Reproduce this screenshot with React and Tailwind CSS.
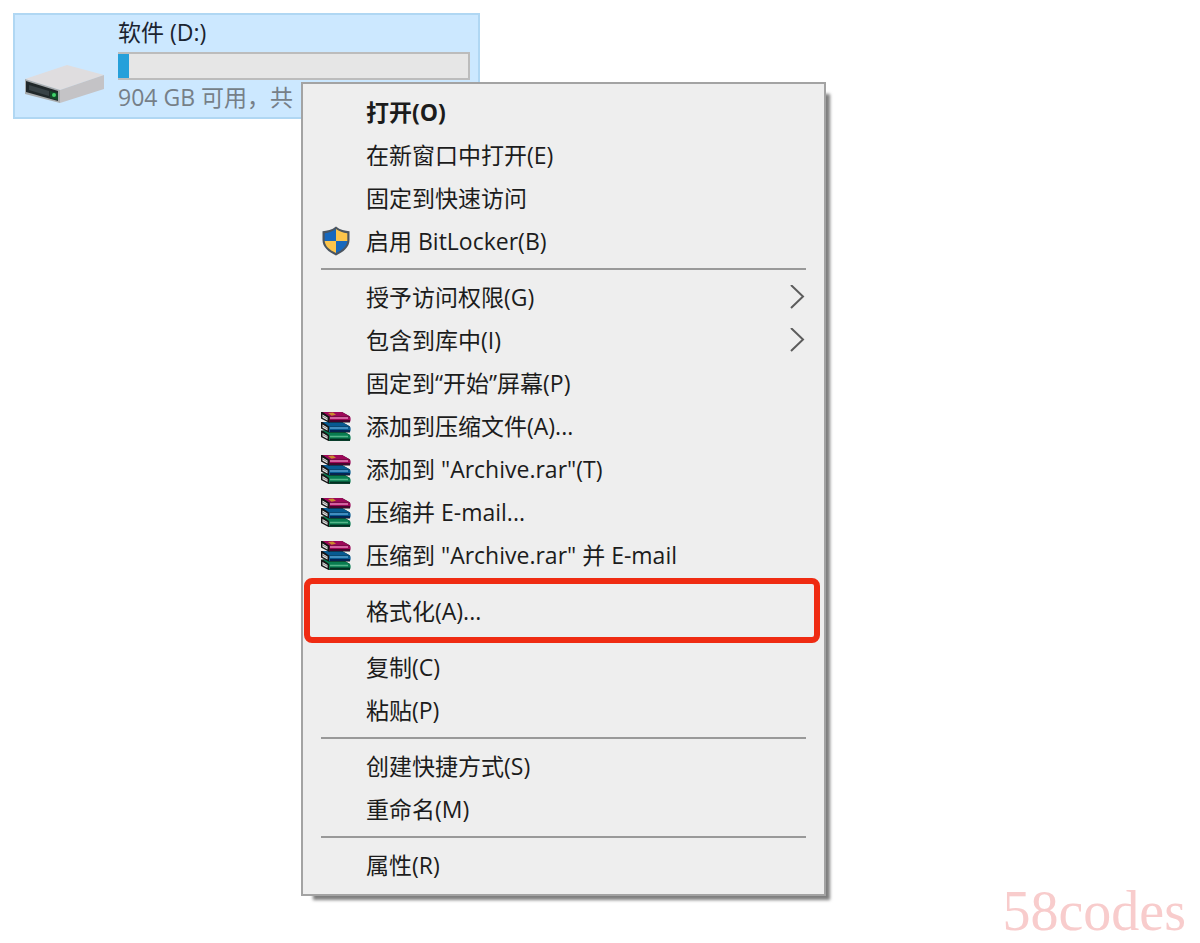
import clsx from 'clsx'

const menuGroups = [
  [
    { label: '打开(O)', bold: true },
    { label: '在新窗口中打开(E)' },
    { label: '固定到快速访问' },
    { label: '启用 BitLocker(B)', icon: ShieldIcon },
  ],
  [
    { label: '授予访问权限(G)', submenu: true },
    { label: '包含到库中(I)', submenu: true },
    { label: '固定到“开始”屏幕(P)' },
    { label: '添加到压缩文件(A)...', icon: BooksIcon },
    { label: '添加到 "Archive.rar"(T)', icon: BooksIcon },
    { label: '压缩并 E-mail...', icon: BooksIcon },
    { label: '压缩到 "Archive.rar" 并 E-mail', icon: BooksIcon },
  ],
  [{ label: '格式化(A)...', highlighted: true }],
  [{ label: '复制(C)' }, { label: '粘贴(P)' }],
  [{ label: '创建快捷方式(S)' }, { label: '重命名(M)' }],
  [{ label: '属性(R)' }],
]

function ShieldIcon() {
  return (
    <svg viewBox="0 0 32 32" className="w-8 h-8" aria-hidden="true">
      <path d="M16 0.500C12 4 7 5 2.500 5.200V14c0 7 6 12 13.500 15.500C23.500 26 29.500 21 29.500 14V5.200C25 5 20 4 16 .5z" fill="#4b5560" />
      <path d="M16 3C13 5.300 9 6.800 4.700 7.200V15H16z" fill="#1768bd" />
      <path d="M16 3c3 2.300 7 3.800 11.300 4.200V15H16z" fill="#fcc54b" />
      <path d="M4.700 15c.5 5.500 5 9 11.300 12V15z" fill="#fcc54b" />
      <path d="M27.300 15c-.5 5.500-5 9-11.300 12V15z" fill="#1768bd" />
    </svg>
  )
}

function Book({ y, cover, shine, dark }) {
  return (
    <g transform={`translate(0 ${y})`}>
      <path d="M1 1h21l8 4.500v6H8.500L1 7.500z" fill="#151515" />
      <path d="M2.500 1H22l8 4.500H9z" fill={cover} />
      <path d="M9 5.500h20.500c1.500 0 1.500 5.500 0 5.500H9z" fill={cover} />
      <path d="M10 7h18" stroke={shine} strokeWidth="1.500" />
      <path d="M10 10h20" stroke={dark} strokeWidth="1.800" />
      <path d="M2.500 3.500l5 3v3l-5-2.700z" fill="#e8e8e8" />
      <path d="M2.500 5l5 2.800" stroke="#6f6f6f" strokeWidth=".8" />
    </g>
  )
}

function BooksIcon() {
  return (
    <svg viewBox="0 0 32 32" className="w-8 h-8" aria-hidden="true">
      <Book y={18.500} cover="#087c50" shine="#55b58a" dark="#032e22" />
      <Book y={10} cover="#075a91" shine="#57a0cf" dark="#071e4a" />
      <Book y={0} cover="#9c0859" shine="#e680b8" dark="#3a0628" />
      <path d="M1.500 1.500L9 6v5.500" fill="none" stroke="#151515" strokeWidth="1.200" />
      <path d="M8 2l5-.5 3 2.300-4.500 1z" fill="#c98a2c" />
    </svg>
  )
}

function DriveIcon() {
  return (
    <svg viewBox="0 0 80 42" className="w-20 h-[42px]" aria-hidden="true">
      <path d="M0 16L42 2l37 10-44 15z" fill="#dfdddf" />
      <path d="M35 27l44-15v14L35 40z" fill="#c4c3c6" />
      <path d="M0 16l35 11v13L0 31z" fill="#a7abad" />
      <path d="M1 18l32 10v10L1 29z" fill="#20282a" />
      <path d="M4 22l20 6v5L4 27z" fill="#384246" />
      <path d="M25 28l8 2v7l-8-2z" fill="#124a2a" />
      <circle cx="29" cy="32" r="2" fill="#3fd46a" />
    </svg>
  )
}

function DriveTile() {
  return (
    <section className="flex w-[467px] h-[106px] border-2 border-[#b0d7f3] bg-[#cce8ff] pl-2.5 pr-2">
      <div className="pt-12 w-[93px] shrink-0">
        <DriveIcon />
      </div>
      <div className="flex-1 min-w-0">
        <h2 className="h-[37px] leading-[35px] text-[#1b2430]">软件 (D:)</h2>
        <div className="h-7 border-2 border-l-0 border-[#bcbcbc] bg-[#e6e6e6]">
          <div className="h-full w-[11px] bg-[#26a0da]" />
        </div>
        <p className="h-[34px] leading-[34px] whitespace-nowrap overflow-hidden text-[#767f88]">904 GB 可用，共</p>
      </div>
    </section>
  )
}

function MenuItem({ label, icon: Icon, bold, submenu, highlighted }) {
  return (
    <li role="none" className={clsx(highlighted && 'relative')}>
      <button
        type="button"
        role="menuitem"
        className={clsx('flex items-center w-full h-[43px] pl-[17px] pr-[18px] gap-3.5 text-left', bold && 'font-bold')}
      >
        <span className="w-8 shrink-0">{Icon && <Icon />}</span>
        <span className="flex-1 whitespace-nowrap">{label}</span>
        {submenu && (
          <svg viewBox="0 0 18 26" className="w-[18px] h-[26px]" fill="none" stroke="#5c5c5c" strokeWidth="2" aria-hidden="true">
            <path d="M3 0l12 11.500L3 23" />
          </svg>
        )}
      </button>
      {highlighted && (
        <span className="absolute left-px right-1 -top-3 -bottom-2.5 border-6 border-[#ef2b12] rounded-lg pointer-events-none" />
      )}
    </li>
  )
}

function ContextMenu() {
  return (
    <div
      role="menu"
      className="absolute left-[301px] top-[82px] w-[525px] border-2 border-[#a3a3a3] bg-[#eeeeee] py-[7px] shadow-[8px_8px_3px_-4px_#00000080]"
    >
      {menuGroups.map((items, i) => (
        <div key={i}>
          {i > 0 && <hr className="h-0.5 border-0 bg-[#999999] mx-[18px] mt-[5px] mb-1.5" />}
          <ul role="none">
            {items.map((item) => (
              <MenuItem key={item.label} {...item} />
            ))}
          </ul>
        </div>
      ))}
    </div>
  )
}

export default function App() {
  return (
    <main className="relative min-h-screen overflow-hidden bg-white p-[13px] text-[23px] text-[#1c1c1c] font-['Open_Sans','Noto_Sans_CJK_SC',sans-serif]">
      <DriveTile />
      <ContextMenu />
      <p className="absolute right-3.5 bottom-0 text-[56px] leading-[64px] text-[#f8cccc] font-['Liberation_Serif',serif]">
        58codes
      </p>
    </main>
  )
}
